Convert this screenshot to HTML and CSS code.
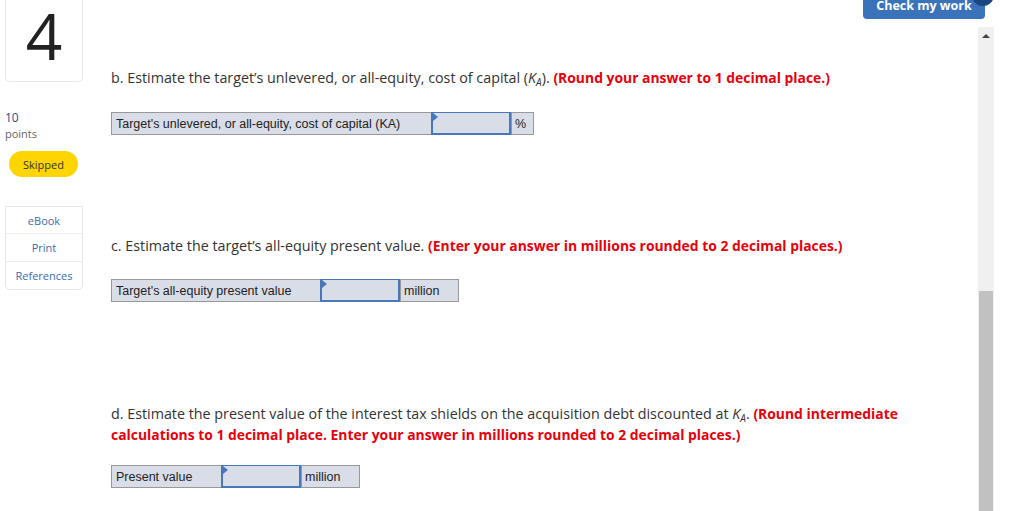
FILE: index.html
```html
<!DOCTYPE html>
<html>
<head>
<meta charset="utf-8">
<link rel="stylesheet" href="styles.css">
</head>
<body>
<div class="page">
  <aside class="side">
    <div class="qnum">4</div>
    <div class="pts"><span class="pts-n">10</span><span class="pts-l">points</span></div>
    <div class="skip">Skipped</div>
    <div class="links">
      <div class="lnk">eBook</div>
      <div class="lnk">Print</div>
      <div class="lnk">References</div>
    </div>
  </aside>
  <main class="main">
    <p class="q q-b">b. Estimate the target’s unlevered, or all-equity, cost of capital (<i>K<sub>A</sub></i>). <b class="red">(Round your answer to 1 decimal place.)</b></p>
    <div class="tbl t-b">
      <div class="lab">Target's unlevered, or all-equity, cost of capital (KA)</div>
      <div class="inp"></div>
      <div class="unit">%</div>
    </div>
    <p class="q q-c">c. Estimate the target’s all-equity present value. <b class="red">(Enter your answer in millions rounded to 2 decimal places.)</b></p>
    <div class="tbl t-c">
      <div class="lab">Target's all-equity present value</div>
      <div class="inp"></div>
      <div class="unit">million</div>
    </div>
    <p class="q q-d">d. Estimate the present value of the interest tax shields on the acquisition debt discounted at <i>K<sub>A</sub></i>. <b class="red">(Round intermediate calculations to 1 decimal place. Enter your answer in millions rounded to 2 decimal places.)</b></p>
    <div class="tbl t-d">
      <div class="lab">Present value</div>
      <div class="inp"></div>
      <div class="unit">million</div>
    </div>
  </main>
  <div class="rail">
    <div class="scroll"><div class="arrow"></div><div class="thumb"></div></div>
  </div>
</div>
<div class="check">Check my work</div>
<div class="dot"></div>
</body>
</html>
```
FILE: styles.css
```css
html, body { margin: 0; padding: 0; background: #fff; overflow: hidden; }
body { width: 1024px; height: 511px; position: relative; font-family: "Open Sans", "Liberation Sans", sans-serif; color: #333; }
.page { display: flex; height: 511px; }
.side { width: 78px; padding-left: 5px; flex: none; display: flex; flex-direction: column; }
.qnum { border: 1px solid #e8e8e8; border-top: none; border-radius: 0 0 5px 5px; display: flex; align-items: center; justify-content: center; font-size: 64px; font-weight: 400; color: #222; line-height: 74px; padding-bottom: 10px; box-sizing: border-box; height: 82px; }
.pts { margin-top: 28px; display: flex; flex-direction: column; }
.pts-n { font-size: 12px; color: #1f4d85; line-height: 15px; }
.pts-l { font-size: 11px; color: #666; line-height: 18px; }
.skip { margin: 8px 0 0 4px; width: 69px; height: 26px; border-radius: 13px; background: #ffd500; font-size: 11px; color: #333; display: flex; align-items: center; justify-content: center; }
.links { margin-top: 29px; border: 1px solid #e6e6e6; border-radius: 0 0 5px 5px; }
.lnk { height: 27px; display: flex; align-items: center; justify-content: center; font-size: 11px; color: #3b6cb0; border-top: 1px solid #ececec; }
.lnk:first-child { border-top: none; height: 26px; }
.main { flex: 1; padding-left: 28px; }
.q { margin: 0; font-size: 14.3px; line-height: 21px; color: #333; }
.q i { font-style: italic; }
.q sub { font-size: 10px; position: relative; top: 3px; vertical-align: baseline; line-height: 1; }
.red { color: #e8000b; font-weight: 700; font-size: 13.9px; }
.q-b { margin-top: 67px; }
.q-c { margin-top: 100px; }
.q-d { margin-top: 101px; width: 820px; }
.tbl { display: flex; height: 23px; box-sizing: border-box; border: 1px solid #999; background: #d9dde8; font-family: "Liberation Sans", Arial, sans-serif; font-size: 12.5px; color: #222; }
.lab { padding-left: 4px; display: flex; align-items: center; }
.unit { border-left: 1px solid #999; padding-left: 3px; display: flex; align-items: center; }
.inp { position: relative; width: 80px; box-sizing: border-box; border: 2px solid #4878bb; border-top-width: 1px; background: #d9dde8; margin: -1px 0; height: 23px; }
.inp::before { content: ""; position: absolute; left: 0; top: 0; border-left: 5px solid #4878bb; border-bottom: 4px solid transparent; border-top: 4px solid transparent; }
.t-b { margin-top: 24px; width: 423px; }
.t-b .lab { width: 315px; }
.t-b .unit { flex: 1; }
.t-c { margin-top: 23px; width: 348px; }
.t-c .lab { width: 204px; }
.t-c .unit { flex: 1; }
.t-d { margin-top: 20px; width: 249px; }
.t-d .lab { width: 105px; }
.t-d .unit { flex: 1; }
.rail { width: 46px; flex: none; padding-left: 0; }
.scroll { margin-top: 27px; width: 16px; height: 484px; background: #f0f0f0; position: relative; display: flex; flex-direction: column; align-items: center; }
.arrow { margin-top: 7px; border-left: 4px solid transparent; border-right: 4px solid transparent; border-bottom: 4px solid #444; }
.thumb { margin-top: auto; width: 14px; height: 220px; background: #c1c1c1; }
.check { position: absolute; left: 863px; top: 0; width: 122px; height: 19px; border-radius: 0 0 4px 4px; background: #3a73ba; color: #fff; font-weight: 700; font-size: 12.5px; line-height: 11px; display: flex; align-items: flex-start; justify-content: center; box-sizing: border-box; }
.dot { position: absolute; left: 972px; top: -16px; width: 22px; height: 22px; border-radius: 50%; background: #1d4680; }
```
